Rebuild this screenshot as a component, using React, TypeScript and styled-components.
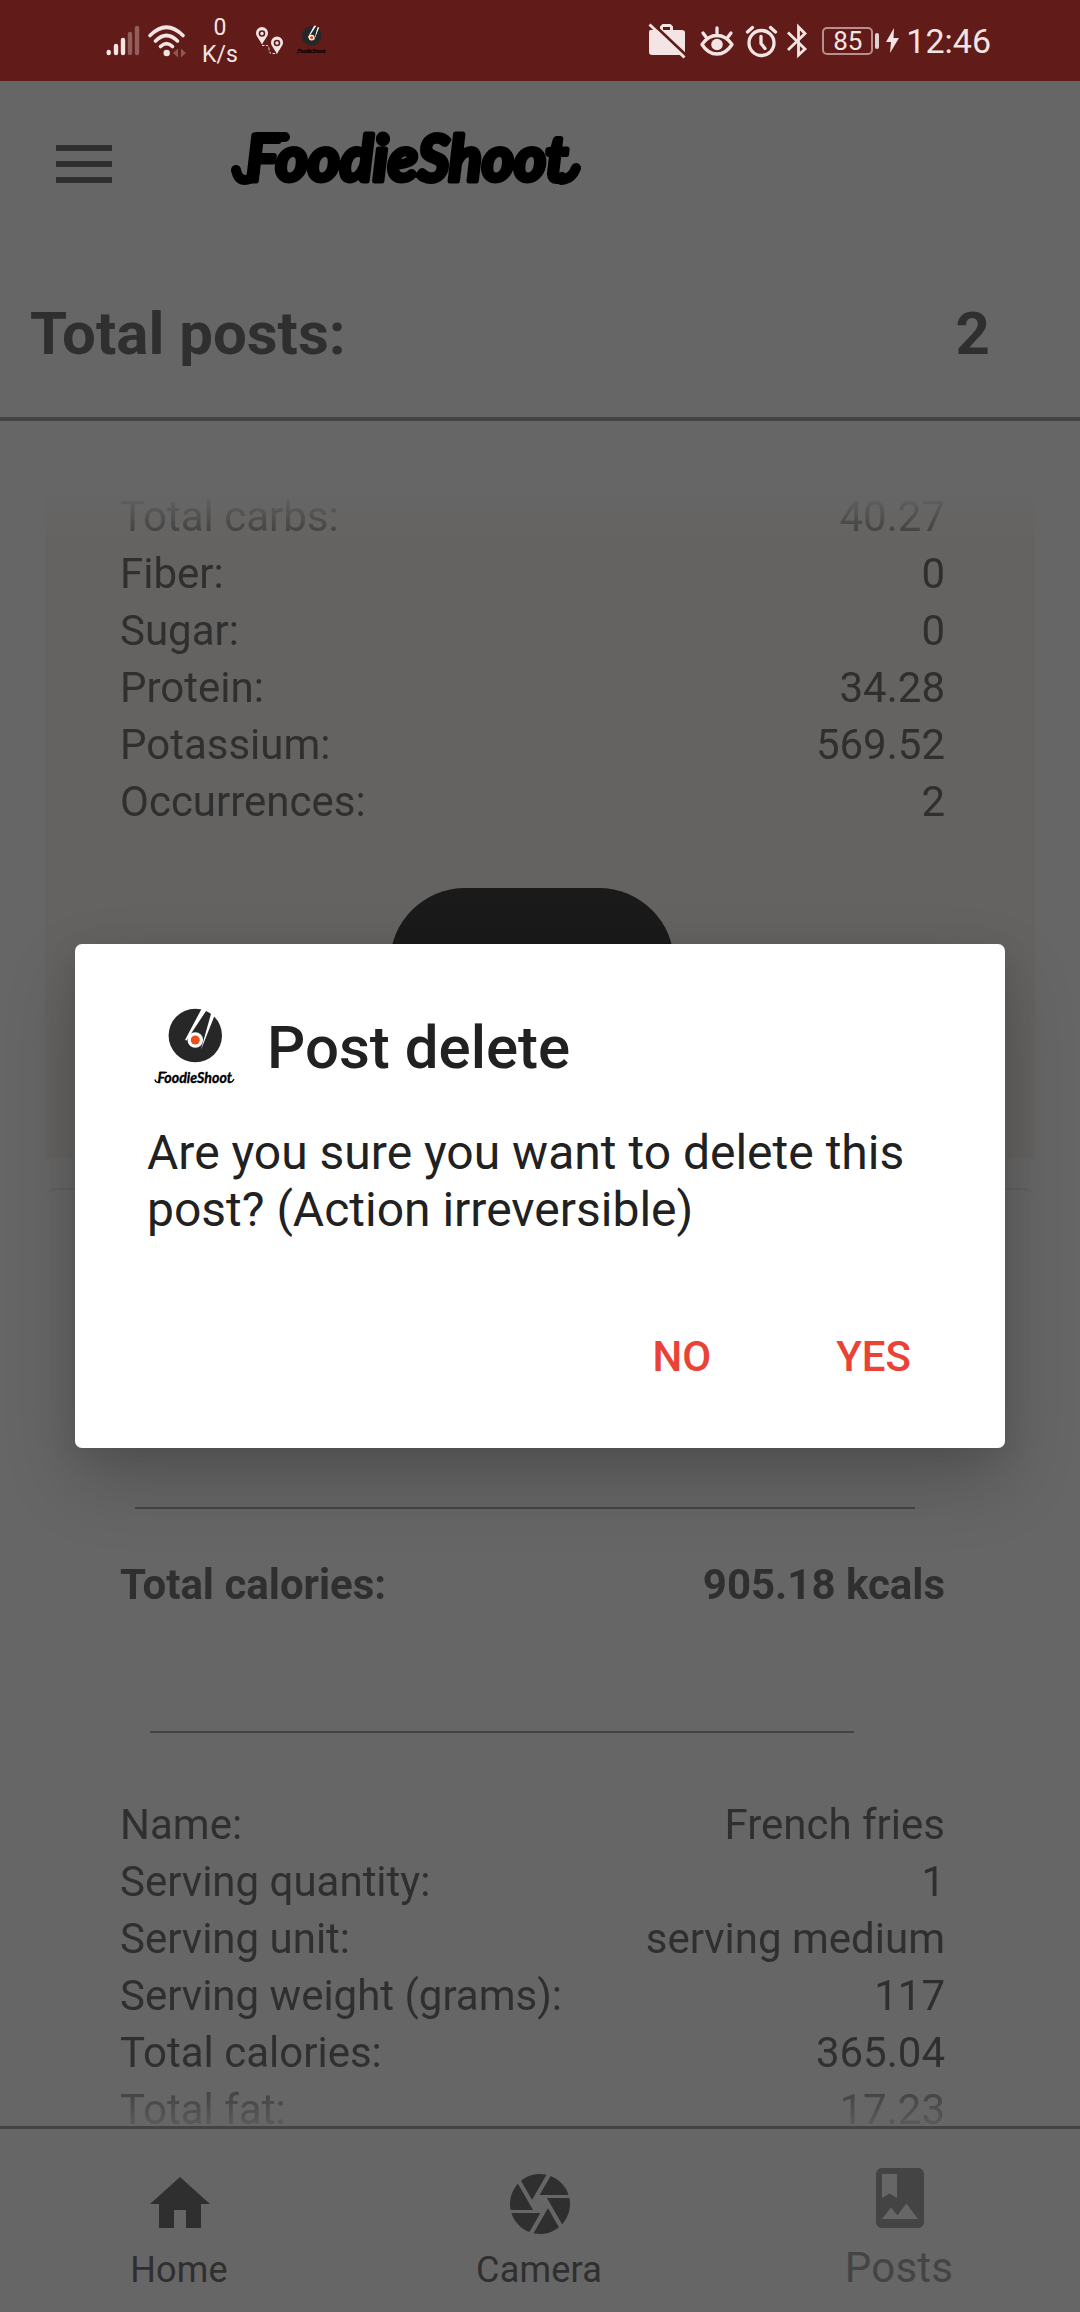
import React from "react";
import styled, { createGlobalStyle, css } from "styled-components";

const GlobalStyle = createGlobalStyle`
  * { box-sizing: border-box; }
  body { margin: 0; background: #666666; font-family: Roboto, "Liberation Sans", sans-serif; }
`;

const ink = "#2f2f2f";
const rule = "#444444";

const Screen = styled.main`
  display: flex;
  flex-direction: column;
  width: 1080px;
  height: 2312px;
  overflow: hidden;
  background: #666666;
  color: ${ink};
`;

const StatusBar = styled.header`
  display: flex;
  flex: none;
  justify-content: space-between;
  align-items: center;
  height: 81px;
  padding: 0 89px 0 106px;
  background: #611b18;
  color: #f3e5e3;
`;

const StatusGroup = styled.div`
  display: flex;
  align-items: center;
  height: 81px;
`;

const Glyph = styled.svg<{ $ml?: number }>`
  display: block;
  flex: none;
  overflow: visible;
  margin-left: ${(p) => p.$ml ?? 0}px;
`;

const NetSpeed = styled.div`
  width: 40px;
  margin-left: 14px;
  font-size: 23px;
  line-height: 27px;
  text-align: center;
  white-space: nowrap;
`;

const Battery = styled.div`
  display: flex;
  align-items: center;
  justify-content: center;
  width: 51px;
  height: 28px;
  margin-left: 15px;
  border: 2px solid #b98f8d;
  border-radius: 5px;
  font-size: 26px;
  line-height: 26px;
`;

const BatteryTip = styled.div`
  width: 4px;
  height: 16px;
  margin-left: 2px;
  border-radius: 2px;
  background: #e3d0ce;
`;

const Clock = styled.time`
  margin-left: 7px;
  font-size: 34px;
  line-height: 40px;
`;

const AppBar = styled.div`
  display: flex;
  flex: none;
  align-items: flex-start;
  height: 171px;
  padding: 50px 0 0 56px;
`;

const MenuButton = styled.button`
  display: flex;
  flex-direction: column;
  gap: 10px;
  width: 56px;
  margin-top: 14px;
  padding: 0;
  border: 0;
  background: none;
`;

const MenuBar = styled.span`
  height: 6px;
  background: ${ink};
`;

const Summary = styled.section`
  display: flex;
  flex: none;
  align-items: center;
  justify-content: space-between;
  height: 169px;
  padding: 0 90px 1px 30px;
  border-bottom: 4px solid ${rule};
  font-size: 60px;
  font-weight: 700;
  line-height: 70px;
`;

const Feed = styled.section`
  display: flex;
  flex: none;
  flex-direction: column;
  height: 1634px;
  margin-top: 71px;
  padding: 0 45px;
  overflow: hidden;
  mask-image: linear-gradient(to bottom, transparent 0, #000 64px, #000 1570px, transparent 1650px);
`;

const PostCard = styled.article`
  flex: none;
  height: 667px;
  background: #656361;
`;

const NextCard = styled.article`
  flex: none;
  height: 1100px;
  margin-top: 29px;
  border-top: 2px solid #5f5f5f;
  border-radius: 10px;
`;

const Rows = styled.div<{ $top: number }>`
  margin-top: ${(p) => p.$top}px;
  padding: 0 90px 0 75px;
`;

const Row = styled.div<{ $bold?: boolean }>`
  display: flex;
  justify-content: space-between;
  font-size: 42px;
  line-height: 57px;
  white-space: nowrap;
  ${(p) =>
    p.$bold &&
    css`
      font-weight: 700;
    `}
`;

const PillButton = styled.button`
  display: block;
  width: 284px;
  height: 150px;
  margin: 58px 0 0 345px;
  border: 0;
  border-radius: 76px;
  background: #1a1a1a;
`;

const Divider = styled.hr<{ $left: number; $width: number; $top: number }>`
  width: ${(p) => p.$width}px;
  height: 2px;
  margin: ${(p) => p.$top}px 0 0 ${(p) => p.$left}px;
  border: 0;
  background: ${rule};
`;

const TabBar = styled.nav`
  display: grid;
  grid-template-columns: repeat(3, 1fr);
  flex: none;
  height: 186px;
  border-top: 3px solid ${rule};
`;

const Tab = styled.a<{ $active?: boolean }>`
  display: flex;
  flex-direction: column;
  align-items: center;
  padding-top: ${(p) => (p.$active ? 33 : 39)}px;
  color: ${(p) => (p.$active ? "#444444" : ink)};
  font-size: ${(p) => (p.$active ? 42 : 36)}px;
  line-height: 44px;
`;

const TabLabel = styled.span<{ $top: number }>`
  margin-top: ${(p) => p.$top}px;
  margin-right: 2px;
  letter-spacing: 0.2px;
`;

const Dialog = styled.div`
  position: absolute;
  top: 944px;
  left: 75px;
  width: 930px;
  height: 504px;
  padding: 62px 72px 0;
  border-radius: 7px;
  background: #ffffff;
  box-shadow: 0 32px 72px rgba(0, 0, 0, 0.2), 0 6px 30px rgba(0, 0, 0, 0.08);
  color: #212121;
`;

const DialogTitle = styled.h2`
  display: flex;
  align-items: center;
  height: 84px;
  margin: 0;
  font-size: 60px;
  font-weight: 500;
  line-height: 70px;
`;

const TitleText = styled.span`
  margin-left: 30px;
`;

const Message = styled.p`
  margin: 34px 0 0;
  font-size: 48px;
  line-height: 57px;
  white-space: nowrap;
`;

const Actions = styled.div`
  display: flex;
  justify-content: flex-end;
  gap: 125px;
  margin-top: 94px;
  padding-right: 22px;
`;

const ActionButton = styled.button`
  padding: 0;
  border: 0;
  background: none;
  color: #ea4335;
  font: 500 42px/50px Roboto, "Liberation Sans", sans-serif;
`;

/* Brand lettering on a 350x54 box, with a swash at each end. */
function Wordmark({ weight, swash }: { weight: number; swash: number }) {
  return (
    <g stroke="#000" strokeLinejoin="round" strokeLinecap="round">
      <text
        x={15}
        y={50}
        fontFamily="Lato, sans-serif"
        fontStyle="italic"
        fontWeight={700}
        fontSize={63}
        textLength={322}
        lengthAdjust="spacingAndGlyphs"
        fill="#000"
        strokeWidth={weight}
      >
        FoodieShoot
      </text>
      <path d="M5 39Q7 49 14 49Q21 49 24 40M26 6H54M330 49Q341 48 345 37" fill="none" strokeWidth={swash} />
    </g>
  );
}

function AppLogo({ size, ml = 0 }: { size: number; ml?: number }) {
  return (
    <Glyph width={size} height={size} viewBox="0 0 84 84" $ml={ml}>
      <circle cx="42.300" cy="29.500" r="26.700" fill="#272727" />
      <path d="M49 2h6L33.500 34.500 32 34ZM58.500 6h4.500L49.500 40 48 43.500Z" fill="#fff" />
      <circle cx="42.300" cy="34" r="7.800" fill="#fff" />
      <circle cx="42.300" cy="34" r="4.500" fill="#f04e1a" />
      <g transform="translate(1 65) scale(.231)">
        <Wordmark weight={1.5} swash={6} />
      </g>
    </Glyph>
  );
}

function SignalIcon() {
  return (
    <Glyph width="34" height="32" viewBox="0 0 34 32" stroke="currentColor" strokeWidth="4.4" strokeLinecap="round">
      <path d="M2.7 27v1M10 21v7M17 15v13" />
      <path d="M24 9v19M31 3v25" opacity=".33" />
    </Glyph>
  );
}

function WifiIcon() {
  return (
    <Glyph width="38" height="32" viewBox="0 0 38 32" fill="none" stroke="currentColor" strokeWidth="3.6" strokeLinecap="round" $ml={8}>
      <path d="M2 10.5Q18.500-6 35 10.500M7.500 16Q18.500 5 29.500 16M12.500 21.500Q18.500 15.500 24.500 21.500" />
      <circle cx="18.700" cy="28" r="3.200" fill="currentColor" stroke="none" />
      <path d="m30 23.500-5 4.500 5 4.500zM33 23.500l5 4.500-5 4.500z" fill="currentColor" stroke="none" opacity=".3" />
    </Glyph>
  );
}

function RouteIcon() {
  const pin = "M0 17C-3 11-6 9-6 5.500a6 6 0 0 1 12 0C6 9 3 11 0 17Z";
  return (
    <Glyph width="30" height="28" viewBox="0 0 30 28" fill="currentColor" $ml={15}>
      <g transform="translate(7 .5)">
        <path d={pin} />
        <circle cy="6" r="3.300" fill="#611b18" />
        <circle cy="6" r="1.700" />
      </g>
      <g transform="translate(22 10)">
        <path d={pin} />
        <circle cy="6" r="3.300" fill="#611b18" />
        <circle cy="6" r="1.700" />
      </g>
      <path d="M7 18.500h5q2 0 2 4t3 4h5" fill="none" stroke="currentColor" strokeDasharray="2.500 1.500" />
    </Glyph>
  );
}

function BriefcaseOffIcon() {
  return (
    <Glyph width="38" height="36" viewBox="0 0 38 36">
      <path d="M2 7h10V3.500L14.500 1h8L25 3.500V7h9q3 0 3 3v19q0 3-3 3H4q-3 0-3-3V10q0-3 1-3Zm13-3v3h7V4Z" fill="currentColor" fillRule="evenodd" />
      <path d="M4 0 40 34" stroke="#611b18" strokeWidth="3" />
      <path d="M1.500 1.500 36.500 34.500" stroke="currentColor" strokeWidth="3" />
    </Glyph>
  );
}

function EyeIcon() {
  return (
    <Glyph width="34" height="32" viewBox="0 0 34 32" fill="none" stroke="currentColor" strokeWidth="3.300" strokeLinecap="round" $ml={14}>
      <path d="M2 19.500Q8 10.500 17 10.500T32 19.500Q26 29 17 29T2 19.500Z" strokeLinejoin="round" />
      <circle cx="17" cy="19.500" r="5.800" fill="currentColor" stroke="none" />
      <path d="M17 3v5M3 8l3 4M31 8l-3 4" />
    </Glyph>
  );
}

function AlarmIcon() {
  return (
    <Glyph width="31" height="32" viewBox="0 0 31 32" fill="none" stroke="currentColor" strokeWidth="3.300" strokeLinecap="round" $ml={12}>
      <circle cx="15.500" cy="18" r="12.500" />
      <path d="M15 11.500v7l4 5M6.500 2.500 1.500 7M24.500 2.500l5 4.500" />
    </Glyph>
  );
}

function BluetoothIcon() {
  return (
    <Glyph width="20" height="34" viewBox="0 0 20 34" fill="none" stroke="currentColor" strokeWidth="2.800" $ml={10}>
      <path d="M1 8.500 18 25l-6.500 6V3L18 9.500 1 26" />
    </Glyph>
  );
}

function BoltIcon() {
  return (
    <Glyph width="13" height="25" viewBox="0 0 13 25" fill="currentColor" $ml={7}>
      <path d="M8 0 0 14h5L4 25l9-15H7.500Z" />
    </Glyph>
  );
}

const carbRows = [
  ["Total carbs:", "40.27"],
  ["Fiber:", "0"],
  ["Sugar:", "0"],
  ["Protein:", "34.28"],
  ["Potassium:", "569.52"],
  ["Occurrences:", "2"],
];

const foodRows = [
  ["Name:", "French fries"],
  ["Serving quantity:", "1"],
  ["Serving unit:", "serving medium"],
  ["Serving weight (grams):", "117"],
  ["Total calories:", "365.04"],
  ["Total fat:", "17.23"],
];

function RowList({ rows, top }: { rows: string[][]; top: number }) {
  return (
    <Rows $top={top}>
      {rows.map(([label, value]) => (
        <Row key={label}>
          <span>{label}</span>
          <span>{value}</span>
        </Row>
      ))}
    </Rows>
  );
}

export default function App() {
  return (
    <>
      <GlobalStyle />
      <Screen>
        <StatusBar>
          <StatusGroup>
            <SignalIcon />
            <WifiIcon />
            <NetSpeed>
              0<br />
              K/s
            </NetSpeed>
            <RouteIcon />
            <AppLogo size={31} ml={11} />
          </StatusGroup>
          <StatusGroup>
            <BriefcaseOffIcon />
            <EyeIcon />
            <AlarmIcon />
            <BluetoothIcon />
            <Battery>85</Battery>
            <BatteryTip />
            <BoltIcon />
            <Clock>12:46</Clock>
          </StatusGroup>
        </StatusBar>

        <AppBar>
          <MenuButton aria-label="Menu">
            <MenuBar />
            <MenuBar />
            <MenuBar />
          </MenuButton>
          <Glyph width="350" height="54" viewBox="0 0 350 54" $ml={119}>
            <Wordmark weight={5} swash={10} />
          </Glyph>
        </AppBar>

        <Summary>
          <span>Total posts:</span>
          <span>2</span>
        </Summary>

        <Feed>
          <PostCard>
            <RowList rows={carbRows} top={-4} />
            <PillButton aria-label="Delete" />
          </PostCard>
          <NextCard>
            <Divider $left={90} $width={780} $top={317} />
            <Rows $top={47}>
              <Row $bold>
                <span>Total calories:</span>
                <span>905.18 kcals</span>
              </Row>
            </Rows>
            <Divider $left={105} $width={704} $top={118} />
            <RowList rows={foodRows} top={63} />
          </NextCard>
        </Feed>

        <TabBar>
          <Tab>
            <Glyph width="72" height="72" viewBox="0 0 24 24" fill="currentColor">
              <path d="M10 20v-6h4v6h5v-8h3L12 3 2 12h3v8z" />
            </Glyph>
            <TabLabel $top={8}>Home</TabLabel>
          </Tab>
          <Tab>
            <Glyph width="72" height="72" viewBox="0 0 24 24" fill="currentColor">
              <path d="M9.400 10.500l4.770-8.260C13.470 2.090 12.750 2 12 2c-2.400 0-4.600.85-6.320 2.250l3.660 6.350.06-.1zM21.540 9c-.92-2.920-3.150-5.260-6-6.340L11.880 9h9.660zm.26 1h-7.490l.29.500 4.760 8.250C21 16.970 22 14.610 22 12c0-.69-.07-1.350-.2-2zM8.540 12l-3.900-6.750C3.010 7.030 2 9.390 2 12c0 .69.07 1.350.2 2h7.490l-1.150-2zm-6.080 3c.92 2.920 3.150 5.260 6 6.340L12.120 15H2.460zm11.270 0l-3.900 6.760c.7.150 1.420.24 2.170.24 2.400 0 4.600-.85 6.320-2.250l-3.660-6.350-.93 1.600z" />
            </Glyph>
            <TabLabel $top={8}>Camera</TabLabel>
          </Tab>
          <Tab $active>
            <Glyph width="72" height="72" viewBox="0 0 24 24" fill="currentColor">
              <path d="M18 2H6c-1.100 0-2 .9-2 2v16c0 1.100.9 2 2 2h12c1.100 0 2-.9 2-2V4c0-1.100-.9-2-2-2zM6 4h5v8l-2.500-1.500L6 12V4zm0 15l3-3.860 2.140 2.580 3-3.860L18 19H6z" />
            </Glyph>
            <TabLabel $top={12}>Posts</TabLabel>
          </Tab>
        </TabBar>
      </Screen>

      <Dialog role="dialog">
        <DialogTitle>
          <AppLogo size={84} ml={6} />
          <TitleText>Post delete</TitleText>
        </DialogTitle>
        <Message>
          Are you sure you want to delete this
          <br />
          post? (Action irreversible)
        </Message>
        <Actions>
          <ActionButton>NO</ActionButton>
          <ActionButton>YES</ActionButton>
        </Actions>
      </Dialog>
    </>
  );
}
